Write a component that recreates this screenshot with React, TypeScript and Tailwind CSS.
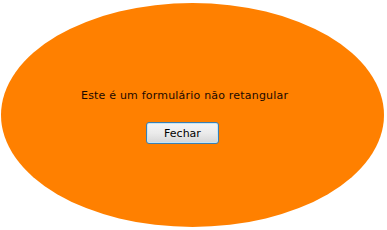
import React from "react";

export default function App() {
  return (
    <div className="w-[387px] h-[230px] bg-white overflow-hidden">
      <div className="ml-[1px] mt-[3px] w-[383px] h-[224px] rounded-[50%] bg-[#ff8000]">
        <div className="flex flex-col items-start pt-[86px] pl-[80px] font-['DejaVu_Sans',sans-serif] text-[11px] text-[#1a0800]">
          <p className="leading-[14px] tracking-[0.2px]">Este é um formulário não retangular</p>
          <button className="mt-[19px] ml-[65px] w-[73px] h-[22px] rounded-[3px] border border-[#3c7fb1] bg-gradient-to-b from-[#f4f4f4] via-[#ebebeb] to-[#d6d6d6] shadow-[inset_0_0_0_1px_#c4e5f6] text-[11px] leading-none text-black">
            Fechar
          </button>
        </div>
      </div>
    </div>
  );
}
